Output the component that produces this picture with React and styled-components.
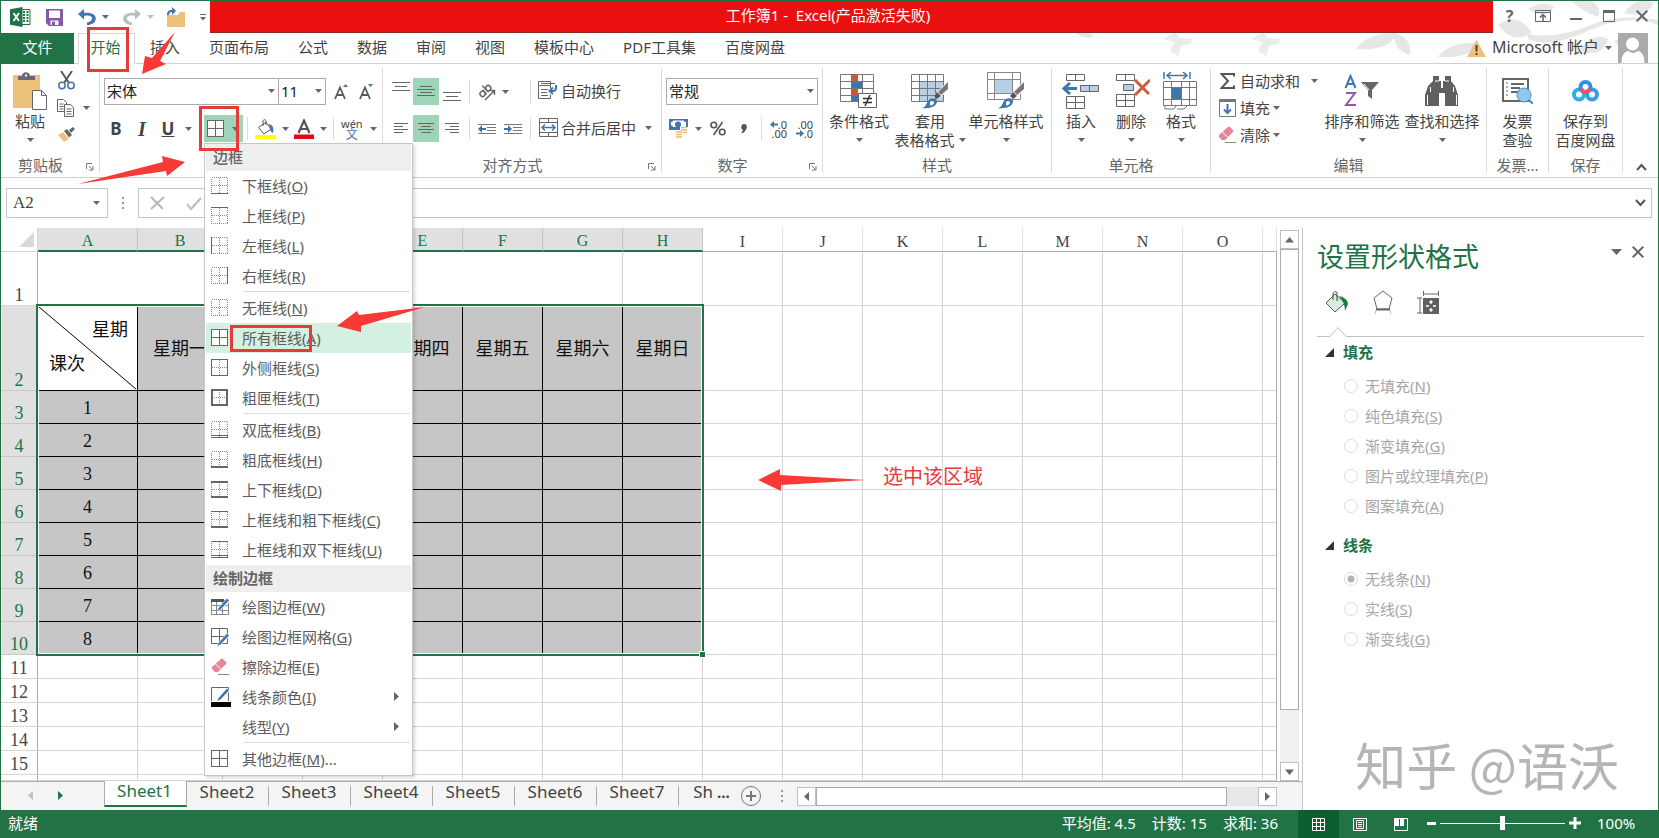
import React from "react";
import styled, { createGlobalStyle, css } from "styled-components";

const GREEN = "#217346";
const RED = "#e53b3b";

const Global = createGlobalStyle`
  *, *::before, *::after { box-sizing: border-box; }
  body { margin: 0; background: #fff; color: #444; font: 15px/20px "Noto Sans", "Noto Sans CJK SC", sans-serif; }
  button, input, select { font: inherit; color: inherit; margin: 0; }
  svg { display: block; flex: none; }
`;

const Window = styled.div`
  position: relative;
  display: flex;
  flex-direction: column;
  min-height: 100vh;
  border: 1px solid ${GREEN};
  border-bottom: 0;
  overflow: hidden;
`;

const Plain = styled.button`
  display: flex;
  align-items: center;
  justify-content: center;
  border: 0;
  padding: 0;
  background: none;
  white-space: nowrap;
`;

/* ---------- title bar and tabs ---------- */

const Foliage = styled.svg`
  position: absolute;
  top: 0;
  right: 0;
`;
const TitleBar = styled.header`
  position: relative;
  display: flex;
  height: 32px;
`;
const QuickAccess = styled.div`
  display: flex;
  align-items: center;
  width: 209px;
  padding-left: 9px;
`;
const QuickButton = styled(Plain)`
  width: ${(p) => p.$w}px;
  height: 30px;
  justify-content: flex-start;
  gap: 6px;
`;
const DocTitle = styled.h1`
  flex: 1;
  margin: 0;
  padding-right: 47px;
  background: #ea1010;
  border-bottom: 1px solid #8e2a1c;
  color: #fff;
  font-size: 15px;
  font-weight: 400;
  line-height: 29px;
  text-align: center;
  white-space: pre;
`;
const WindowControls = styled.div`
  display: flex;
  width: 165px;
  color: #666;
  font-weight: 700;
  font-size: 16px;
`;
const ControlButton = styled(Plain)`
  width: 33px;
  height: 30px;
`;
const TabRow = styled.nav`
  position: relative;
  display: flex;
  height: 31px;
  border-bottom: 1px solid #d0d0d0;
`;
const FileTab = styled(Plain)`
  width: 73px;
  height: 31px;
  padding-bottom: 3px;
  background: ${GREEN};
  color: #fff;
`;
const ActiveTab = styled(Plain)`
  width: 57px;
  height: 31px;
  margin: 0 15px 0 4px;
  padding: 0 2px 3px 0;
  border: 1px solid #d4d4d4;
  border-bottom-color: #fff;
  background: #fff;
  color: ${GREEN};
`;
const TabList = styled.div`
  display: flex;
  gap: 29px;
  flex: 1;
  height: 28px;
`;
const Account = styled(Plain)`
  gap: 6px;
  padding-right: 10px;
  height: 30px;
  font-size: 16px;
`;
const AccountName = styled.span`
  padding-bottom: 2px;
`;

/* ---------- ribbon ---------- */

const Ribbon = styled.section`
  display: flex;
  height: 114px;
  padding: 4px 0;
  border-bottom: 1px solid #d0d0d0;
`;
const GroupBox = styled.div`
  display: flex;
  flex-direction: column;
  flex: none;
  width: ${(p) => p.$w}px;
  border-right: 1px solid #dcdcdc;
`;
const GroupBody = styled.div`
  display: flex;
  height: 84px;
  padding-left: ${(p) => p.$pad || 0}px;
`;
const GroupFooter = styled.div`
  display: flex;
  align-items: center;
  height: 21px;
  padding-top: 4px;
  color: #666;
`;
const GroupLabel = styled.span`
  flex: 1;
  text-align: center;
  white-space: nowrap;
`;
const Launcher = styled(Plain)`
  width: 19px;
  height: 12px;
  padding-top: 4px;
`;
const Rows = styled.div`
  display: flex;
  flex-direction: column;
  gap: 10px;
  padding: 10px 0 0 ${(p) => p.$pad || 0}px;
`;
const Row = styled.div`
  display: flex;
  align-items: center;
  height: 27px;
`;
const StackedCommands = styled.div`
  display: flex;
  flex-direction: column;
  width: ${(p) => p.$w}px;
  padding-left: ${(p) => p.$pad || 0}px;
`;
const Tool = styled(Plain)`
  width: ${(p) => p.$w}px;
  height: 27px;
  ${(p) => p.$active && css`background: #9fd5b7;`}
  ${(p) => p.$start && css`justify-content: flex-start; padding-left: 3px; gap: ${p.$gap || 7}px;`}
`;
const LetterTool = styled(Tool)`
  font: ${(p) => (p.$italic ? "italic" : "normal")} 700 ${(p) => p.$size || 17}px/20px ${(p) => (p.$italic ? '"Liberation Serif", serif' : '"Noto Sans", sans-serif')};
  text-decoration: ${(p) => (p.$underline ? "underline" : "none")};
`;
const Command = styled(Plain)`
  height: 27px;
  gap: 3px;
  padding-bottom: 2px;
  justify-content: flex-start;
`;
const CommandIcon = styled.span`
  display: flex;
  justify-content: center;
  width: 20px;
`;
const CommandArrow = styled.span`
  padding-left: ${(p) => p.$gap || 0}px;
`;
const Big = styled(Plain)`
  flex-direction: column;
  justify-content: flex-start;
  width: ${(p) => p.$w}px;
  padding-top: 2px;
`;
const BigIcon = styled.span`
  display: flex;
  align-items: center;
  justify-content: center;
  height: 41px;
`;
const BigLine = styled.span`
  display: flex;
  align-items: center;
  justify-content: center;
  gap: 4px;
  height: 19px;
`;
const Divider = styled.i`
  flex: none;
  width: 1px;
  height: 23px;
  margin: 0 4px;
  background: #dcdcdc;
`;
const Combo = styled.label`
  display: flex;
  position: relative;
  width: ${(p) => p.$w}px;
  height: 27px;
  & + & { margin-left: -1px; }
`;
const ComboSelect = styled.select`
  appearance: none;
  width: 100%;
  border: 1px solid #ababab;
  border-radius: 0;
  padding: 0 3px 2px 2px;
  background: #fff;
  color: #222;
`;
const ComboArrow = styled.span`
  position: absolute;
  right: 4px;
  top: 11px;
  pointer-events: none;
`;
const MenuAnchor = styled.div`
  position: relative;
  margin-left: 8px;
`;
const Phonetic = styled.span`
  display: flex;
  flex-direction: column;
  align-items: center;
  font-size: 11px;
  line-height: 11px;
`;
const PhoneticGlyph = styled.span`
  color: #3f76ae;
  font-size: 12px;
`;
const Decimals = styled.span`
  display: flex;
  flex-direction: column;
  align-items: flex-end;
  width: 16px;
  font-size: 11px;
  line-height: 9px;
`;
const DecimalLine = styled.span`
  display: flex;
  align-items: center;
`;
const RibbonEnd = styled.div`
  display: flex;
  flex: 1;
  align-items: flex-end;
  justify-content: flex-end;
  padding: 0 11px 2px 0;
`;

/* ---------- border menu ---------- */

const Menu = styled.div`
  position: absolute;
  z-index: 5;
  top: 28px;
  left: 0;
  width: 209px;
  padding: 0 1px 1px;
  border: 1px solid #c6c6c6;
  background: #fff;
  box-shadow: 2px 2px 3px rgba(0, 0, 0, 0.15);
`;
const MenuHeading = styled.div`
  height: 27px;
  padding: 0 7px;
  background: #eee;
  color: #666;
  font-weight: ${(p) => (p.$bold ? 600 : 500)};
  line-height: 26px;
`;
const MenuItem = styled(Plain)`
  width: 100%;
  height: 30px;
  padding: 0 9px 1px 5px;
  justify-content: flex-start;
  color: #5c5c5c;
  ${(p) => p.$active && css`background: #d3f0e0;`}
`;
const MenuIcon = styled.span`
  width: 31px;
`;
const MenuLabel = styled.span`
  flex: 1;
  text-align: left;
`;
const MenuRule = styled.hr`
  height: 1px;
  margin: 0 1px 1px 38px;
  border: 0;
  background: #dcdcdc;
`;

/* ---------- formula bar ---------- */

const FormulaBar = styled.section`
  display: flex;
  height: 50px;
  padding: 10px 6px 10px 5px;
`;
const NameBox = styled.label`
  display: flex;
  align-items: center;
  width: 102px;
  padding: 0 7px 0 6px;
  border: 1px solid #c6c6c6;
`;
const BareInput = styled.input`
  flex: 1;
  min-width: 0;
  border: 0;
  padding: 0;
  background: none;
  font: 17px/20px "Liberation Serif", serif;
`;
const Grip = styled.span`
  display: flex;
  align-items: center;
  justify-content: center;
  width: 30px;
`;
const FormulaBox = styled.label`
  display: flex;
  align-items: center;
  flex: 1;
  gap: 16px;
  padding: 0 5px 0 11px;
  border: 1px solid #c6c6c6;
`;

/* ---------- worksheet ---------- */

const Workspace = styled.div`
  display: flex;
  flex: 1;
`;
const SheetPane = styled.main`
  display: flex;
  flex-direction: column;
  flex: 1;
  min-width: 0;
`;
const GridArea = styled.div`
  display: flex;
  flex: 1;
`;
const TableFrame = styled.div`
  position: relative;
  flex: 1;
  min-width: 0;
`;
const Grid = styled.table`
  width: 100%;
  table-layout: fixed;
  border-collapse: separate;
  border-spacing: 0;
  font: 18px/20px "Liberation Serif", "Noto Sans CJK SC", serif;
`;
const Corner = styled.th`
  padding: 4px 3px 4px 18px;
  border-right: 1px solid #d4d4d4;
  border-bottom: 1px solid #d4d4d4;
`;
const ColHead = styled.th`
  height: 24px;
  padding: 3px 0 0;
  font-size: 16px;
  line-height: 19px;
  font-weight: 400;
  border-right: 1px solid #e0e0e0;
  border-bottom: 1px solid #ababab;
  ${(p) => p.$sel && css`
    background: #e0e0e0;
    color: ${GREEN};
    border-right-color: #c4c4c4;
    border-bottom: 2px solid ${GREEN};
  `}
`;
const RowHead = styled.th`
  height: ${(p) => p.$h}px;
  padding: 0;
  font-weight: 400;
  vertical-align: bottom;
  border-right: 1px solid #ababab;
  border-bottom: 1px solid #d8d8d8;
  ${(p) => p.$sel && css`background: #e0e0e0; color: ${GREEN}; border-bottom-color: #c8c8c8;`}
`;
const Cell = styled.td`
  padding: 2px 0 0;
  border-right: 1px solid #d4d4d4;
  border-bottom: 1px solid #d4d4d4;
  text-align: center;
  color: #111;
  white-space: nowrap;
  ${(p) => p.$sel && css`background: #c6c6c6; border-color: #000;`}
  ${(p) => p.$edge && css`border-right-color: #ababab;`}
`;
const SplitCell = styled.td`
  position: relative;
  padding: 0 9px 2px 11px;
  border-right: 1px solid #000;
  border-bottom: 1px solid #000;
  color: #111;
`;
const SplitTop = styled.div`
  padding-bottom: 14px;
  text-align: right;
`;
const Diagonal = styled.svg`
  position: absolute;
  inset: 0;
  width: 100%;
  height: 100%;
`;
const Selection = styled.div`
  position: absolute;
  left: 35px;
  top: 76px;
  width: 668px;
  height: 352px;
  border: 2px solid ${GREEN};
  box-shadow: inset 0 0 0 1px #fff;
  pointer-events: none;
  &::after {
    content: "";
    position: absolute;
    right: -4px;
    bottom: -4px;
    width: 7px;
    height: 7px;
    border: 1px solid #fff;
    background: ${GREEN};
  }
`;
const VScroll = styled.div`
  display: flex;
  flex-direction: column;
  width: 19px;
  margin: 2px 3px 0 3px;
  background: #f0f0f0;
`;
const HScroll = styled.div`
  display: flex;
  flex: none;
  width: 480px;
  height: 19px;
  margin: 5px 25px 0 0;
  background: #e8e8e8;
`;
const ScrollButton = styled(Plain)`
  flex: none;
  width: 19px;
  height: 19px;
  border: 1px solid #c0c0c0;
  background: #fff;
`;
const ScrollThumb = styled.div`
  flex: none;
  ${(p) => (p.$vertical ? css`height: 461px;` : css`width: 411px;`)}
  border: 1px solid #ababab;
  background: #fff;
`;
const Spacer = styled.div`
  flex: 1;
`;
const SheetBar = styled.footer`
  display: flex;
  height: 29px;
  border-top: 1px solid #ababab;
  background: #f4f4f4;
`;
const SheetNav = styled.div`
  display: flex;
  align-items: center;
  flex: none;
  gap: 20px;
  width: 103px;
  padding-left: 25px;
`;
const SheetTab = styled(Plain)`
  position: relative;
  flex: none;
  width: 82px;
  height: 22px;
  padding: 0 2px 3px 0;
  font-size: 17px;
  ${(p) => p.$active && css`
    width: 83px;
    height: 26px;
    margin-top: -1px;
    padding-bottom: 4px;
    background: #fff;
    color: ${GREEN};
    border: solid #ababab;
    border-width: 0 1px;
    border-bottom: 2px solid ${GREEN};
  `}
  ${(p) => p.$rule && css`
    &::after {
      content: "";
      position: absolute;
      right: 0;
      top: 4px;
      height: 20px;
      border-right: 1px solid #ababab;
    }
  `}
  ${(p) => p.$short && css`
    width: 36px;
    justify-content: flex-end;
  `}
`;
const More = styled.span`
  padding: 0 10px 0 2px;
  font-weight: 700;
`;

/* ---------- format pane ---------- */

const Pane = styled.aside`
  width: 356px;
  border-left: 1px solid #c6c6c6;
  padding: 13px 14px 0;
`;
const PaneHead = styled.div`
  display: flex;
  align-items: center;
  height: 32px;
`;
const PaneTitle = styled.h2`
  flex: 1;
  margin: 0;
  color: ${GREEN};
  font-size: 27px;
  line-height: 32px;
  font-weight: 400;
`;
const PaneTools = styled.div`
  display: flex;
  align-items: center;
  gap: 10px;
  padding-bottom: 10px;
`;
const PaneTabs = styled.div`
  display: flex;
  align-items: center;
  gap: 23px;
  height: 36px;
  margin-top: 11px;
  padding-left: 8px;
`;
const NotchRule = styled.svg`
  width: 100%;
  height: 11px;
  margin: 6px 0 5px;
`;
const Section = styled.fieldset`
  margin: 0;
  padding: 0 0 0 27px;
  border: 0;
  & + & { margin-top: 14px; }
`;
const SectionTitle = styled.legend`
  display: flex;
  align-items: center;
  gap: 9px;
  margin: 6px 0 9px -19px;
  padding: 0;
  color: ${GREEN};
  font-weight: 700;
  line-height: 20px;
`;
const Option = styled.label`
  display: flex;
  align-items: center;
  gap: 7px;
  height: 30px;
  color: #a6a6a6;
`;
const Radio = styled.input`
  appearance: none;
  width: 14px;
  height: 14px;
  border: 1px solid #dcdcdc;
  border-radius: 50%;
  background: #fff;
  &:checked {
    background: radial-gradient(circle, #b4b4b4 0 3px, #fff 4px);
  }
`;
const Watermark = styled.div`
  position: absolute;
  right: 39px;
  bottom: 42px;
  color: #b5b5b5;
  font: 400 51px/64px "Noto Sans CJK SC", sans-serif;
  white-space: nowrap;
`;

/* ---------- status bar ---------- */

const StatusBar = styled.footer`
  display: flex;
  align-items: center;
  height: 28px;
  padding-left: 7px;
  background: ${GREEN};
  color: #fff;
  white-space: nowrap;
`;
const StatusText = styled.span`
  padding-bottom: 3px;
`;
const Stats = styled.div`
  display: flex;
  gap: 16px;
  margin-left: auto;
  padding: 0 20px 3px 0;
`;
const ViewButton = styled(Plain)`
  width: 41px;
  height: 28px;
  ${(p) => p.$active && css`background: #0a6030;`}
`;
const ZoomBox = styled.div`
  display: flex;
  align-items: center;
  width: 237px;
  gap: 4px;
  padding: 0 0 2px 6px;
`;
const ZoomSlider = styled.input`
  appearance: none;
  width: 125px;
  height: 14px;
  background: linear-gradient(#fff, #fff) center / 100% 1px no-repeat;
  &::-webkit-slider-thumb {
    appearance: none;
    width: 5px;
    height: 14px;
    background: #fff;
  }
`;
const ZoomValue = styled.output`
  margin-left: 12px;
`;

const Annotations = styled.svg`
  position: absolute;
  z-index: 10;
  top: -1px;
  left: -1px;
  overflow: visible;
  pointer-events: none;
`;
const Callout = styled.p`
  position: absolute;
  left: 882px;
  top: 463px;
  margin: 0;
  color: ${RED};
  font-size: 20px;
  line-height: 26px;
`;

/* ---------- icons ---------- */

const Down = ({ color = "#666" }) => (
  <svg width="7" height="4"><path d="M0 0h7L3.5 4z" fill={color} /></svg>
);
const Tri = ({ dir, color = "#666" }) => (
  <svg width="10" height="10">
    <path fill={color} d={{ up: "M0 7.500h9L4.500 2z", down: "M0 2.500h9L4.500 8z", left: "M7 0v9L2 4.500z", right: "M2 0v9l5-4.500z" }[dir]} />
  </svg>
);
const Cross = ({ size = 11, color = "#666", w = 2 }) => (
  <svg width={size} height={size} stroke={color} strokeWidth={w}><path d={`M.7 .7L${size - 0.7} ${size - 0.7}M${size - 0.7} .7L.7 ${size - 0.7}`} /></svg>
);
const LauncherIcon = () => (
  <svg width="8" height="8" fill="none" stroke="#777"><path d="M.5 6V.5H6M3 3l3.500 3.500M7 3v4H3" /></svg>
);
const ExcelIcon = () => (
  <svg width="21" height="20">
    <path d="M12 2.500h8v15h-8" fill="#fff" stroke={GREEN} />
    <path d="M13 5h2M16.500 5h2M13 8h2M16.500 8h2M13 11h2M16.500 11h2M13 14h2M16.500 14h2" stroke={GREEN} strokeWidth="2" />
    <path d="M0 2.200L12.500 0v20L0 17.800z" fill={GREEN} />
    <path d="M3.500 6l5.500 8M9 6l-5.500 8" stroke="#fff" strokeWidth="1.800" />
  </svg>
);
const SaveIcon = () => (
  <svg width="17" height="17">
    <path d="M0 0h17v17H3l-3-3z" fill="#8458a5" />
    <path d="M3 1.500h11V9H3z" fill="#fff" /><path d="M4.500 11.500h8V16h-8z" fill="#fff" /><path d="M6 12.500h3V16H6z" fill="#8458a5" />
  </svg>
);
const UndoIcon = ({ color, flip }) => (
  <svg width="18" height="16" viewBox="0 0 18 16"><g transform={flip ? "translate(18 0) scale(-1 1)" : undefined}>
    <path d="M6 0L0 5l6 5.500V7c5-1.200 8.500 0 8 3-.4 2-2.500 3-5 3.500V16c5 0 8.500-2.500 8.800-6C18 5 13 3 6 3.800z" fill={color} />
  </g></svg>
);
const OpenIcon = () => (
  <svg width="20" height="20">
    <path d="M1 8h11l2-3h5v15H1z" fill="#ecc27a" />
    <path d="M1 8C1 4 3 3 6 3V0l4 4-4 4V5C4 5 3 6 3 8z" fill="#3f76ae" />
  </svg>
);
const RibbonOptionsIcon = () => (
  <svg width="16" height="12" fill="none" stroke="#666"><path d="M.5 .5h15v11H.5z" /><path d="M1 2.500h14" strokeWidth="1" /><path d="M8 11V5M5 7.500L8 4.500l3 3" strokeWidth="1.500" /></svg>
);
const WarningIcon = () => (
  <svg width="19" height="17"><path d="M9.500 0L19 17H0z" fill="#ecc27a" /><path d="M9.500 5v6.500M9.500 13v2" stroke="#444" strokeWidth="2" /></svg>
);
const AvatarIcon = () => (
  <svg width="30" height="30"><path d="M0 0h30v30H0z" fill="#ababab" /><circle cx="14.500" cy="11" r="6.500" fill="#fff" /><path d="M3.500 30c0-9 4-12 7-12 3 2.500 6 2.500 9 0 3 0 7 3 7 12z" fill="#fff" /></svg>
);
const PasteIcon = () => (
  <svg width="36" height="38">
    <path d="M1 3h27v33H1z" fill="#ecc27a" /><path d="M6 8V4h4c0-5 8-5 8 0h5v4z" fill="#6a6a6a" /><path d="M13 2.500h2v2h-2z" fill="#fff" />
    <path d="M20.500 18.500h9l5 5v14h-14z" fill="#fff" stroke="#666" /><path d="M29.500 18.500v5h5" fill="none" stroke="#666" />
  </svg>
);
const CutIcon = () => (
  <svg width="17" height="19" fill="none">
    <path d="M3 0l8 12M14 0L6 12" stroke="#5a5a5a" strokeWidth="2" /><circle cx="4" cy="14.500" r="3.200" stroke="#3f76ae" strokeWidth="1.500" /><circle cx="13" cy="14.500" r="3.200" stroke="#3f76ae" strokeWidth="1.500" />
  </svg>
);
const CopyIcon = () => (
  <svg width="18" height="18" fill="#fff" stroke="#666">
    <path d="M.5 .5h6l3 3v9h-9z" /><path d="M2.500 5h4M2.500 7.500h4M2.500 10h4" /><path d="M7.500 5.500h6l3 3v9h-9z" /><path d="M9.500 10h5M9.500 12.500h5M9.500 15h5" />
  </svg>
);
const PainterIcon = () => (
  <svg width="17" height="15"><path d="M0 8l5-3 6 7-5 3z" fill="#ecc27a" /><path d="M6 4l3-2 5 6-3 2.500z" fill="#666" /><path d="M11 3l4-3 2 2-4 4z" fill="#666" /></svg>
);
const SizeIcon = ({ up }) => (
  <svg width="15" height="17">
    <path d="M1 16L6 4.500 11 16M3 12h6" fill="none" stroke="#5a5a5a" strokeWidth="1.800" />
    <path d={up ? "M9 4h5l-2.500-3z" : "M9 1h5l-2.500 3z"} fill="#3f76ae" />
  </svg>
);
const FillIcon = () => (
  <svg width="21" height="20">
    <path d="M3.500 8.500L11 3l5 7-7 5z" fill="#fff" stroke="#555" /><path d="M8 7V2.500C8 0 11 0 11 2.500V6" fill="none" stroke="#555" />
    <path d="M14 5c4 1 5 4 4 9-3-1-3-5-4-9z" fill="#3f76ae" /><path d="M0 16h21v4H0z" fill="#ff0" />
  </svg>
);
const FontColorIcon = () => (
  <svg width="20" height="20"><path d="M4.500 14L10 1.500 15.500 14M6.500 10h7" fill="none" stroke="#555" strokeWidth="2.200" /><path d="M0 15.500h20V20H0z" fill="#e30613" /></svg>
);
const AlignIcon = ({ lines, h = 11 }) => (
  <svg width="18" height={h} stroke="#666" shapeRendering="crispEdges">{lines.map(([a, b], i) => <path key={i} d={`M${a} ${i * 3 + 0.5}H${b}`} />)}</svg>
);
const TopAlignIcon = () => (
  <svg width="18" height="19" stroke="#666" shapeRendering="crispEdges"><path d="M0 .5h18M3 4.500h12M0 8.500h18" /></svg>
);
const BottomAlignIcon = () => (
  <svg width="18" height="19" stroke="#666" shapeRendering="crispEdges"><path d="M0 10.500h18M3 14.500h12M0 18.500h18" /></svg>
);
const OrientIcon = () => (
  <svg width="20" height="18" fill="none" stroke="#666" strokeWidth="1.500">
    <g transform="rotate(-45 7 8)"><circle cx="4" cy="9" r="2.600" /><path d="M6.800 6v6M9.500 3v9" /><circle cx="12" cy="9" r="2.600" /></g>
    <path d="M8 17L17 8M13 7.500h4.500V12" />
  </svg>
);
const IndentIcon = ({ right }) => (
  <svg width="18" height="12">
    <path d="M0 1.500h18M9 4.500h9M9 7.500h9M0 10.500h18" stroke="#777" />
    <path d="M0 3h8v6H0z" fill="#fff" /><path d={right ? "M0 5h4V2l4 4-4 4V7H0z" : "M8 5H4V2L0 6l4 4V7h4z"} fill="#3f76ae" />
  </svg>
);
const WrapIcon = () => (
  <svg width="20" height="19" fill="none" stroke="#666">
    <path d="M.5 .5h12v4H.5zM.5 4.500v13h12v-4M12.500 4.500v3" /><path d="M3 2.500h14M3 8.500h7M3 11.500h6M3 14.500h7" />
    <path d="M18 4v3c0 2-1 3-3 3h-3M15 6.500L11.500 10l3.500 3" stroke="#3f76ae" strokeWidth="2" />
  </svg>
);
const MergeIcon = () => (
  <svg width="19" height="19" fill="none" stroke="#666"><path d="M.5 .5h18v18H.5zM.5 4.500h18M.5 14.500h18M9.500 .5v4M9.500 14.500v4" /><path d="M3 9.500h13M6 6.500l-3 3 3 3M13 6.500l3 3-3 3" stroke="#3f76ae" strokeWidth="1.500" /></svg>
);
const CurrencyIcon = () => (
  <svg width="20" height="19">
    <path d="M0 0h19v11H0z" fill="#3f76ae" /><path d="M2 3c2 0 2-1 2-1.500h11c0 1 1 1.500 2 1.500v5h-3H4c0-1-1-1.500-2-1.500z" fill="#fff" /><circle cx="9" cy="5.500" r="3" fill="#3f76ae" />
    <path d="M11 8h8v4h-8zM6 12h8v6H6zM14 12h5v4h-5z" fill="#fff" /><path d="M12 8.500h6M12 11h6M7 13h6M7 15.500h6M7 18h6M14 13.500h4" stroke="#e8bc72" strokeWidth="1.600" />
  </svg>
);
const TinyArrow = ({ right }) => (
  <svg width="8" height="7"><path d={right ? "M0 2.500h4V0l4 3.500L4 7V4.500H0z" : "M8 2.500H4V0L0 3.500 4 7V4.500h4z"} fill="#3f76ae" /></svg>
);
const Brush = () => (
  <g>
    <path d="M37 9v9L28 27l-5-4z" fill="#fff" /><path d="M37 10v7l-7 6-3-3z" fill="#777" /><path d="M26 20l4 4-4 3-3-3z" fill="#555" />
    <path d="M11 36c4-1 4-4 6-7 3-4 8-3 9 0 0 5-6 8-15 7z" fill="#3f76ae" /><path d="M19 30c2-2 4-1 4 1-1 2-3 3-4 2z" fill="#fff" />
  </g>
);
const CondIcon = () => (
  <svg width="38" height="36">
    <path d="M.5 1.500h33v27H.5z" fill="#fff" /><path d="M11 1h7v7h-7zM11 15h7v7h-7z" fill="#c9573c" /><path d="M11 8h11v7H11zM11 22h7v7h-7z" fill="#3f76ae" />
    <path d="M.5 1.500h33v27H.5zM.5 8.500h33M.5 15.500h33M.5 22.500h33M11.500 1v28M22.500 1v28" fill="none" stroke="#777" />
    <path d="M18.500 20.500h18v14h-18z" fill="#fff" stroke="#666" /><path d="M23 25.500h9M23 29.500h9M30 22l-5 11" stroke="#333" strokeWidth="1.500" />
  </svg>
);
const TableStyleIcon = () => (
  <svg width="38" height="38"><path d="M.5 2.500h32v27H.5z" fill="#fff" /><path d="M9 9h23v21H9z" fill="#b9cfe6" /><path d="M.5 2.500h32v27H.5zM.5 9.500h32M.5 16.500h32M.5 23.500h32M8.500 2v28M16.500 2v28M24.500 2v28" fill="none" stroke="#777" /><Brush /></svg>
);
const CellStyleIcon = () => (
  <svg width="38" height="38"><path d="M.5 .5h33v27H.5z" fill="#fff" /><path d="M8 8h17v13H8z" fill="#b9cfe6" /><path d="M.5 .5h33v27H.5zM.5 7.500h33M.5 21.500h33M7.500 0v28M25.500 0v28" fill="none" stroke="#888" /><Brush /></svg>
);
const InsertIcon = () => (
  <svg width="38" height="36" fill="#fff" stroke="#666">
    <path d="M4.500 1.500h18v6h-18zM13.500 1.500v6M4.500 23.500h18v12h-18zM13.500 23.500v12M4.500 29.500h18" /><path d="M18.500 12.500h18v6h-18z" fill="#b9cfe6" /><path d="M27.500 12.500v6" /><path d="M15 15.500H3M8 10l-6 5.500L8 21" fill="none" stroke="#3f76ae" strokeWidth="3" />
  </svg>
);
const DeleteIcon = () => (
  <svg width="38" height="36" fill="#fff" stroke="#666">
    <path d="M4.500 1.500h18v6h-18zM13.500 1.500v6M4.500 21.500h18v12h-18zM13.500 21.500v12M4.500 27.500h18" /><path d="M11.500 11.500h10v6h-10z" fill="#b9cfe6" /><path d="M23 7l14 14M38 7L23 22" fill="none" stroke="#d05a3c" strokeWidth="3" />
  </svg>
);
const FormatIcon = () => (
  <svg width="36" height="38" fill="none" stroke="#777">
    <path d="M1 0v7M27 0v7M4 3.500h20M8 0L4 3.500 8 7M20 0l4 3.500L20 7" stroke="#3f76ae" strokeWidth="1.500" />
    <path d="M.5 9.500h33v24H.5zM.5 15.500h33M.5 27.500h33M8.500 9v25M18.500 9v25M26.500 9v25" /><path d="M9 16h9v11H9z" fill="#3f76ae" stroke="none" /><path d="M2 34v3h9l2-3M14 37h7l3-3" />
  </svg>
);
const SumIcon = () => (
  <svg width="15" height="16"><path d="M14 3.500V1H1.500L8 8l-6.500 7H14v-2.500" fill="none" stroke="#555" strokeWidth="2" /></svg>
);
const FillDownIcon = () => (
  <svg width="17" height="18"><path d="M.5 .5h16v17H.5z" fill="#fff" stroke="#777" /><path d="M0 0h17v3H0z" fill="#777" /><path d="M8.500 5v9M5 10.500L8.500 14l3.500-3.500" fill="none" stroke="#3f76ae" strokeWidth="2" /></svg>
);
const EraserIcon = () => (
  <svg width="18" height="17"><path d="M1 9L10 1q1-1 2 0l3 3q1 1 0 2L7 14H4L1 11z" fill="#e78698" /><path d="M4.500 6l5.500 5.500" stroke="#fff" /><path d="M7 16.500h11" stroke="#888" /></svg>
);
const SortIcon = () => (
  <svg width="36" height="34" fill="none">
    <path d="M1.500 14L6.500 2l5 12M3 10h7" stroke="#3f76ae" strokeWidth="2" /><path d="M2 19h9L2 31h10" stroke="#8e5aa8" strokeWidth="2" />
    <path d="M17 8h18l-7 8v9l-4-3v-6z" fill="#666" /><path d="M20 10l5 6" stroke="#fff" />
  </svg>
);
const FindIcon = () => (
  <svg width="34" height="31"><path d="M8 1h6v5h2v7h2V6h2V1h6v5l4 5 3 9v11H20V18h-6v13H0V20l3-9 5-5z" fill="#606060" /><path d="M2.500 30V20M31.500 30V20M5.500 12v5M28.500 12v5M10 6h4M20 6h4" stroke="#fff" /></svg>
);
const InvoiceIcon = () => (
  <svg width="31" height="26"><path d="M1 1h25v22H1z" fill="#fff" stroke="#666" strokeWidth="2" /><path d="M5 4v16" stroke="#666" strokeDasharray="2 2" /><path d="M9 6h13M9 10h9M9 14h7" stroke="#666" strokeWidth="2" /><circle cx="22" cy="17" r="7" fill="#90c8f4" stroke="#4a8ac0" /><path d="M27 22l4 4" stroke="#4a8ac0" strokeWidth="2" /></svg>
);
const CloudIcon = () => (
  <svg width="27" height="22" fill="none" strokeWidth="4"><circle cx="7" cy="14.500" r="5" stroke="#2fb0e8" /><circle cx="20" cy="14.500" r="5" stroke="#3a9be6" /><circle cx="13.500" cy="7" r="5" stroke="#2f8fe0" /><path d="M9 9q4.500 6 9 0" stroke="#ea5070" strokeWidth="4" /></svg>
);
const Chevron = ({ up }) => (
  <svg width="11" height="8" fill="none" stroke="#555" strokeWidth="2"><path d={up ? "M1 7l4.500-5L10 7" : "M1 1l4.500 5L10 1"} /></svg>
);
const BorderIcon = ({ t, b, l, r, all, color = "#666" }) => {
  const box = "M.5 .5h16v16H.5zM8.500 .5v16M.5 8.500h16";
  const line = (kind, thin, thick) => kind && (kind === "thick"
    ? <path d={thick} fill={color} />
    : <path d={thin} stroke={color} />);
  return (
    <svg width="18" height="18" fill="none" shapeRendering="crispEdges">
      {all
        ? <path d={box} fill="#fff" stroke={color} />
        : <path d={box} stroke="#888" strokeDasharray="1 1" />}
      {line(t, "M0 .5h17", "M0 0h17v2H0z")}
      {line(l, "M.5 0v17", "M0 0h2v17H0z")}
      {line(r, "M16.500 0v17", "M15 0h2v17h-2z")}
      {line(b, "M0 16.500h17", "M0 15h17v2H0z")}
      {b === "double" && <path d="M0 14.500h17" stroke={color} />}
    </svg>
  );
};
const Pencil = () => (
  <g><path d="M6 15l1-4L16 1l3 3-9 9z" fill="#fff" /><path d="M6 14l2-3.500L16 1.500l2 2L9.500 12.500z" fill="#3f76ae" /></g>
);
const DrawIcon = ({ kind }) => (
  <svg width="20" height="20" fill="none" stroke="#666">
    {kind === "line" && <><path d="M.5 3.500h17v14H.5zM.5 8.500h17M.5 13.500h17M5.500 3v15M11.500 3v15" stroke="#888" /><path d="M0 2h13v3H0z" fill="#555" stroke="none" /></>}
    {kind === "grid" && <path d="M.5 1.500h16v15H.5zM8.500 1v16M0 9.500h17" />}
    {kind === "color" && <><path d="M.5 14V.5h17V14" /><path d="M0 15h20v5H0z" fill="#000" stroke="none" /></>}
    <g stroke="none" transform={kind === "grid" ? "translate(0 5)" : undefined}><Pencil /></g>
  </svg>
);
const BucketIcon = () => (
  <svg width="24" height="23"><path d="M1 12L10 3l10 9-10 9z" fill="#d9ecdf" stroke="#555" /><path d="M8 9V3c0-3 5-3 4 0v7" fill="none" stroke="#444" /><path d="M14 5c5 1 9 4 9 8l-3 7c0-6-2-11-6-15z" fill="#1f7a3d" /></svg>
);
const PentagonIcon = () => (
  <svg width="22" height="24" fill="none" stroke="#666"><path d="M11 1l9 7-3 11H5L2 8z" /><path d="M4 19.500h14" strokeWidth="2" /><path d="M4 20l-1 4M18 20l1 4" stroke="#bbb" /></svg>
);
const SizePropsIcon = () => (
  <svg width="22" height="23" fill="none" stroke="#666"><path d="M6.500 3h15M6.500 0v5M21.500 0v5M3 7v15M0 7h5M0 22h5" /><path d="M6 7h16v16H6z" fill="#606060" stroke="none" /><path d="M14 10v3M14 17v3M9 15h3M16 15h3M12.500 11.500L14 10l1.500 1.500M12.500 18.500L14 20l1.500-1.500" stroke="#fff" strokeWidth="1.300" /></svg>
);

/* ---------- data ---------- */

const TABS = ["插入", "页面布局", "公式", "数据", "审阅", "视图", "模板中心", "PDF工具集", "百度网盘"];
const COLS = "ABCDEFGHIJKLMNO".split("");
const COL_W = { A: 100, B: 85 };
const DAYS = ["星期一", "星期二", "星期三", "星期四", "星期五", "星期六", "星期日"];

const BORDER_MENU = [
  { label: "下框线", k: "O", icon: <BorderIcon b="solid" /> },
  { label: "上框线", k: "P", icon: <BorderIcon t="solid" /> },
  { label: "左框线", k: "L", icon: <BorderIcon l="solid" /> },
  { label: "右框线", k: "R", icon: <BorderIcon r="solid" /> },
  "rule",
  { label: "无框线", k: "N", icon: <BorderIcon /> },
  { label: "所有框线", k: "A", icon: <BorderIcon all />, active: true },
  { label: "外侧框线", k: "S", icon: <BorderIcon t="solid" b="solid" l="solid" r="solid" /> },
  { label: "粗匣框线", k: "T", icon: <BorderIcon t="thick" b="thick" l="thick" r="thick" /> },
  "rule",
  { label: "双底框线", k: "B", icon: <BorderIcon b="double" /> },
  { label: "粗底框线", k: "H", icon: <BorderIcon b="thick" /> },
  { label: "上下框线", k: "D", icon: <BorderIcon t="thick" b="thick" /> },
  { label: "上框线和粗下框线", k: "C", icon: <BorderIcon t="solid" b="thick" /> },
  { label: "上框线和双下框线", k: "U", icon: <BorderIcon t="solid" b="double" /> },
];
const DRAW_MENU = [
  { label: "绘图边框", k: "W", icon: <DrawIcon kind="line" /> },
  { label: "绘图边框网格", k: "G", icon: <DrawIcon kind="grid" /> },
  { label: "擦除边框", k: "E", icon: <EraserIcon /> },
  { label: "线条颜色", k: "I", icon: <DrawIcon kind="color" />, sub: true },
  { label: "线型", k: "Y", sub: true },
  "rule",
  { label: "其他边框", k: "M", icon: <BorderIcon all />, tail: "..." },
];
const FILLS = [["无填充", "N"], ["纯色填充", "S"], ["渐变填充", "G"], ["图片或纹理填充", "P"], ["图案填充", "A"]];
const LINES = [["无线条", "N"], ["实线", "S"], ["渐变线", "G"]];

/* ---------- pieces ---------- */

const Group = ({ label, w, pad, launcher, children }) => (
  <GroupBox $w={w}>
    <GroupBody $pad={pad}>{children}</GroupBody>
    <GroupFooter>
      <GroupLabel>{label}</GroupLabel>
      {launcher && <Launcher aria-label={label + "设置"}><LauncherIcon /></Launcher>}
    </GroupFooter>
  </GroupBox>
);
const BigButton = ({ w, icon, text, second, arrow }) => (
  <Big $w={w}>
    <BigIcon>{icon}</BigIcon>
    <BigLine>{text}</BigLine>
    <BigLine>{second}{arrow && <Down />}</BigLine>
  </Big>
);
const ComboBox = ({ w, label, value }) => (
  <Combo $w={w}>
    <ComboSelect aria-label={label} defaultValue={value}><option>{value}</option></ComboSelect>
    <ComboArrow><Down /></ComboArrow>
  </Combo>
);
const MenuItems = ({ items }) => items.map((it, i) => it === "rule" ? <MenuRule key={i} /> : (
  <MenuItem key={i} role="menuitem" $active={it.active}>
    <MenuIcon>{it.icon}</MenuIcon>
    <MenuLabel>{it.label}(<u>{it.k}</u>){it.tail}</MenuLabel>
    {it.sub && <Tri dir="right" />}
  </MenuItem>
));
const RadioSection = ({ title, name, options, checked }) => (
  <Section disabled>
    <SectionTitle><svg width="9" height="9"><path d="M9 0v9H0z" fill="#333" /></svg>{title}</SectionTitle>
    {options.map(([text, k], i) => (
      <Option key={text}><Radio type="radio" name={name} defaultChecked={i === checked} /><span>{text}(<u>{k}</u>)</span></Option>
    ))}
  </Section>
);

const RibbonBar = () => (
  <Ribbon>
    <Group label="剪贴板" w={99} pad={7} launcher>
      <BigButton w={44} icon={<PasteIcon />} text="粘贴" arrow />
      <StackedCommands $w={44} $pad={4}>
        <Command aria-label="剪切"><CommandIcon><CutIcon /></CommandIcon></Command>
        <Command aria-label="复制"><CommandIcon><CopyIcon /></CommandIcon><CommandArrow $gap={4}><Down /></CommandArrow></Command>
        <Command aria-label="格式刷"><CommandIcon><PainterIcon /></CommandIcon></Command>
      </StackedCommands>
    </Group>
    <Group label="字体" w={283} pad={4} launcher>
      <Rows>
        <Row>
          <ComboBox w={175} label="字体" value="宋体" />
          <ComboBox w={48} label="字号" value="11" />
          <Tool $w={30} aria-label="增大字号"><SizeIcon up /></Tool>
          <Tool $w={20} aria-label="减小字号"><SizeIcon /></Tool>
        </Row>
        <Row>
          <LetterTool $w={24}>B</LetterTool>
          <LetterTool $w={28} $italic $size={20}>I</LetterTool>
          <LetterTool $w={24} $underline>U</LetterTool>
          <Tool $w={16} aria-label="下划线选项"><Down /></Tool>
          <MenuAnchor>
            <Tool $w={39} $active $start aria-label="边框"><BorderIcon all /><Down /></Tool>
            <Menu role="menu">
              <MenuHeading>边框</MenuHeading>
              <MenuItems items={BORDER_MENU} />
              <MenuHeading $bold>绘制边框</MenuHeading>
              <MenuItems items={DRAW_MENU} />
            </Menu>
          </MenuAnchor>
          <Divider />
          <Tool $w={39} $start $gap={6} aria-label="填充颜色"><FillIcon /><Down /></Tool>
          <Tool $w={38} $start $gap={6} aria-label="字体颜色"><FontColorIcon /><Down /></Tool>
          <Divider />
          <Tool $w={39} $start aria-label="拼音"><Phonetic>wén<PhoneticGlyph>文</PhoneticGlyph></Phonetic><Down /></Tool>
        </Row>
      </Rows>
    </Group>
    <Group label="对齐方式" w={279} pad={5} launcher>
      <Rows>
        <Row>
          <Tool $w={25} aria-label="顶端对齐"><TopAlignIcon /></Tool>
          <Tool $w={26} $active aria-label="垂直居中"><AlignIcon lines={[[3, 15], [0, 18], [3, 15], [0, 18]]} /></Tool>
          <Tool $w={26} aria-label="底端对齐"><BottomAlignIcon /></Tool>
          <Divider />
          <Tool $w={52} $start $gap={5} aria-label="方向"><OrientIcon /><Down /></Tool>
          <Divider />
        </Row>
        <Row>
          <Tool $w={25} aria-label="左对齐"><AlignIcon lines={[[2, 16], [2, 11], [2, 16], [2, 11]]} /></Tool>
          <Tool $w={26} $active aria-label="居中"><AlignIcon lines={[[1, 17], [4, 14], [1, 17], [4, 14]]} /></Tool>
          <Tool $w={26} aria-label="右对齐"><AlignIcon lines={[[2, 16], [7, 16], [2, 16], [7, 16]]} /></Tool>
          <Divider />
          <Tool $w={26} aria-label="减少缩进"><IndentIcon /></Tool>
          <Tool $w={26} aria-label="增加缩进"><IndentIcon right /></Tool>
          <Divider />
        </Row>
      </Rows>
      <Rows $pad={3}>
        <Command><CommandIcon><WrapIcon /></CommandIcon>自动换行</Command>
        <Command><CommandIcon><MergeIcon /></CommandIcon>合并后居中<CommandArrow $gap={6}><Down /></CommandArrow></Command>
      </Rows>
    </Group>
    <Group label="数字" w={161} pad={4} launcher>
      <Rows>
        <Row><ComboBox w={152} label="数字格式" value="常规" /></Row>
        <Row>
          <Tool $w={38} $start $gap={6} aria-label="会计数字格式"><CurrencyIcon /><Down /></Tool>
          <Tool $w={27} aria-label="百分比"><svg width="16" height="15" fill="none" stroke="#555" strokeWidth="1.600"><circle cx="3.800" cy="4" r="2.800" /><circle cx="12.200" cy="11" r="2.800" /><path d="M12.500 1L3.500 14" /></svg></Tool>
          <Tool $w={26} aria-label="千位分隔"><svg width="6" height="9"><path d="M3 0c4 0 4 5-1 9H0c2-2 2-3 2-3-3-1-2-6 1-6z" fill="#555" /></svg></Tool>
          <Divider />
          <Tool $w={26} aria-label="增加小数位数"><Decimals><DecimalLine><TinyArrow />.0</DecimalLine><DecimalLine>.00</DecimalLine></Decimals></Tool>
          <Tool $w={26} aria-label="减少小数位数"><Decimals><DecimalLine>.00</DecimalLine><DecimalLine><TinyArrow right />.0</DecimalLine></Decimals></Tool>
        </Row>
      </Rows>
    </Group>
    <Group label="样式" w={229}>
      <BigButton w={72} icon={<CondIcon />} text="条件格式" arrow />
      <BigButton w={70} icon={<TableStyleIcon />} text="套用" second="表格格式" arrow />
      <BigButton w={82} icon={<CellStyleIcon />} text="单元格样式" arrow />
    </Group>
    <Group label="单元格" w={159} pad={4}>
      <BigButton w={50} icon={<InsertIcon />} text="插入" arrow />
      <BigButton w={50} icon={<DeleteIcon />} text="删除" arrow />
      <BigButton w={50} icon={<FormatIcon />} text="格式" arrow />
    </Group>
    <Group label="编辑" w={276}>
      <StackedCommands $w={111} $pad={6}>
        <Command><CommandIcon><SumIcon /></CommandIcon>自动求和<CommandArrow $gap={8}><Down /></CommandArrow></Command>
        <Command><CommandIcon><FillDownIcon /></CommandIcon>填充<CommandArrow><Down /></CommandArrow></Command>
        <Command><CommandIcon><EraserIcon /></CommandIcon>清除<CommandArrow><Down /></CommandArrow></Command>
      </StackedCommands>
      <BigButton w={80} icon={<SortIcon />} text="排序和筛选" arrow />
      <BigButton w={80} icon={<FindIcon />} text="查找和选择" arrow />
    </Group>
    <Group label="发票..." w={62}><BigButton w={62} icon={<InvoiceIcon />} text="发票" second="查验" /></Group>
    <Group label="保存" w={74}><BigButton w={74} icon={<CloudIcon />} text="保存到" second="百度网盘" /></Group>
    <RibbonEnd><Plain aria-label="折叠功能区"><Chevron up /></Plain></RibbonEnd>
  </Ribbon>
);

const GridRow = ({ n, h, label = n }) => {
  const inSel = n >= 2 && n <= 10;
  return (
    <tr>
      <RowHead $h={h} $sel={inSel}>{label}</RowHead>
      {n === 1 && <Cell colSpan={7} />}
      {COLS.map((c, i) => {
        if (n === 1 && i < 7) return null;
        if (n === 2 && i === 0) return (
          <SplitCell key={c}>
            <Diagonal viewBox="0 0 100 85" preserveAspectRatio="none"><path d="M1 1L99 84" stroke="#000" /></Diagonal>
            <SplitTop>星期</SplitTop>
            <div>课次</div>
          </SplitCell>
        );
        const text = n === 2 && i < 8 ? DAYS[i - 1] : inSel && i === 0 ? n - 2 : null;
        return <Cell key={c} $sel={inSel && i < 8}>{text}</Cell>;
      })}
      <Cell $edge />
    </tr>
  );
};

const Worksheet = () => (
  <Grid>
    <colgroup>
      <col width="37" />
      {COLS.map((c) => <col key={c} width={COL_W[c] || 80} />)}
      <col />
    </colgroup>
    <thead>
      <tr>
        <Corner><svg width="15" height="15"><path d="M15 0v15H0z" fill="#d8d8d8" /></svg></Corner>
        {COLS.map((c, i) => <ColHead key={c} $sel={i < 8}>{c}</ColHead>)}
        <ColHead />
      </tr>
    </thead>
    <tbody>
      <GridRow n={1} h={54} />
      <GridRow n={2} h={85} />
      {[3, 4, 5, 6, 7, 8, 9, 10].map((n) => <GridRow key={n} n={n} h={33} />)}
      {[11, 12, 13, 14, 15].map((n) => <GridRow key={n} n={n} h={24} />)}
      <GridRow n={16} h={6} label="" />
    </tbody>
  </Grid>
);

export default function App() {
  return (
    <Window>
      <Global />
      <Foliage width="600" height="62" fill="#e6e6e6" aria-hidden="true">
        <path d="M16 30q10 10 20 5l-8-5z" /><path d="M105 38l12-7 5 6 12 1-1 5-10 2-3 10-8-5 4-9z" opacity=".8" /><path d="M193 38l12-7 5 6 12 1-1 5-10 2-3 10-8-5 4-9z" opacity=".8" />
        <path d="M298 48q10-16 40-16-4 18-40 16zM336 32q18 4 16 22-16-4-16-22zM380 56q12-16 40-14-8 16-40 14zM470 38q20 10 60-8 30-14 60-10l10 4v-5q-30-6-60 2-40 18-70 12z" />
        <path d="M440 24q20-14 34 8-20 12-34-8zM520 50q16-20 30-12-6 20-30 12zM540 16q-20-8-26-16h20q10 6 6 16zM566 12q12-18 30-10-8 16-30 10zM470 8q16-10 26-2-8 14-26 2zM556 40q16-8 24 6-14 8-24-6z" />
      </Foliage>
      <TitleBar>
        <QuickAccess>
          <QuickButton $w={36} aria-label="Excel"><ExcelIcon /></QuickButton>
          <QuickButton $w={32} aria-label="保存"><SaveIcon /></QuickButton>
          <QuickButton $w={45} aria-label="撤销"><UndoIcon color="#3f76ae" /><Down /></QuickButton>
          <QuickButton $w={43} aria-label="重做"><UndoIcon color="#bdbdbd" flip /><Down color="#bdbdbd" /></QuickButton>
          <QuickButton $w={34} aria-label="打开"><OpenIcon /></QuickButton>
          <QuickButton $w={8} aria-label="自定义"><svg width="6" height="7"><path d="M0 .5h6" stroke="#666" /><path d="M0 3h6L3 6.500z" fill="#666" /></svg></QuickButton>
        </QuickAccess>
        <DocTitle>工作簿1 -  Excel(产品激活失败)</DocTitle>
        <WindowControls>
          <ControlButton>?</ControlButton>
          <ControlButton aria-label="功能区显示选项"><RibbonOptionsIcon /></ControlButton>
          <ControlButton aria-label="最小化"><svg width="12" height="10"><path d="M0 8h12" stroke="#666" strokeWidth="2" /></svg></ControlButton>
          <ControlButton aria-label="最大化"><svg width="12" height="12" fill="none" stroke="#666"><path d="M.5 .5h11v11H.5z" /><path d="M0 1.500h12" strokeWidth="3" /></svg></ControlButton>
          <ControlButton aria-label="关闭"><Cross size={12} /></ControlButton>
        </WindowControls>
      </TitleBar>
      <TabRow>
        <FileTab>文件</FileTab>
        <ActiveTab>开始</ActiveTab>
        <TabList>{TABS.map((t) => <Plain key={t}>{t}</Plain>)}</TabList>
        <Account><WarningIcon /><AccountName>Microsoft 帐户</AccountName><Down /><AvatarIcon /></Account>
      </TabRow>
      <RibbonBar />
      <FormulaBar>
        <NameBox><BareInput aria-label="名称框" defaultValue="A2" /><Down /></NameBox>
        <Grip><svg width="2" height="12"><path d="M1 0v2M1 5v2M1 10v2" stroke="#999" strokeWidth="2" /></svg></Grip>
        <FormulaBox>
          <svg width="52" height="14" fill="none" stroke="#b8b8b8" strokeWidth="2"><path d="M1 1l12 12M14 1L1 13M37 8l4 5L51 2" /></svg>
          <BareInput aria-label="编辑栏" />
          <Chevron />
        </FormulaBox>
      </FormulaBar>
      <Workspace>
        <SheetPane>
          <GridArea>
            <TableFrame><Worksheet /><Selection /></TableFrame>
            <VScroll>
              <ScrollButton aria-label="向上滚动"><Tri dir="up" /></ScrollButton>
              <ScrollThumb $vertical />
              <Spacer />
              <ScrollButton aria-label="向下滚动"><Tri dir="down" /></ScrollButton>
            </VScroll>
          </GridArea>
          <SheetBar>
            <SheetNav><Tri dir="left" color="#c0c0c0" /><Tri dir="right" color={GREEN} /></SheetNav>
            <SheetTab $active>Sheet1</SheetTab>
            {[2, 3, 4, 5, 6, 7].map((n) => <SheetTab key={n} $rule>Sheet{n}</SheetTab>)}
            <SheetTab $short>Sh</SheetTab>
            <More>...</More>
            <Plain aria-label="新工作表"><svg width="22" height="22" fill="none" stroke="#777"><circle cx="11" cy="11" r="9.500" /><path d="M11 6v10M6 11h10" strokeWidth="2" /></svg></Plain>
            <Spacer />
            <Grip><svg width="2" height="12"><path d="M1 0v2M1 5v2M1 10v2" stroke="#999" strokeWidth="2" /></svg></Grip>
            <HScroll>
              <ScrollButton aria-label="向左滚动"><Tri dir="left" /></ScrollButton>
              <ScrollThumb />
              <Spacer />
              <ScrollButton aria-label="向右滚动"><Tri dir="right" /></ScrollButton>
            </HScroll>
          </SheetBar>
        </SheetPane>
        <Pane>
          <PaneHead>
            <PaneTitle>设置形状格式</PaneTitle>
            <PaneTools>
              <svg width="11" height="6"><path d="M0 0h11L5.500 6z" fill="#666" /></svg>
              <Plain aria-label="关闭窗格"><Cross size={12} /></Plain>
            </PaneTools>
          </PaneHead>
          <PaneTabs>
            <Plain aria-label="填充与线条"><BucketIcon /></Plain>
            <Plain aria-label="效果"><PentagonIcon /></Plain>
            <Plain aria-label="大小与属性"><SizePropsIcon /></Plain>
          </PaneTabs>
          <NotchRule fill="none" stroke="#c0c0c0"><path d="M0 10.500h13l8-9 8 9h2000" /></NotchRule>
          <RadioSection title="填充" name="fill" options={FILLS} />
          <RadioSection title="线条" name="line" options={LINES} checked={0} />
        </Pane>
      </Workspace>
      <StatusBar>
        <StatusText>就绪</StatusText>
        <Stats><span>平均值: 4.5</span><span>计数: 15</span><span>求和: 36</span></Stats>
        <ViewButton $active aria-label="普通"><svg width="13" height="13" fill="none" stroke="#fff"><path d="M.5 .5h12v12H.5zM.5 4.500h12M.5 8.500h12M4.500 .5v12M8.500 .5v12" /></svg></ViewButton>
        <ViewButton aria-label="页面布局"><svg width="14" height="13" fill="none" stroke="#fff"><path d="M.5 .5h13v12H.5zM3.500 2.500h7v8h-7zM5 4.500h4M5 6.500h4M5 8.500h4" /></svg></ViewButton>
        <ViewButton aria-label="分页预览"><svg width="14" height="13"><path d="M.5 .5h13v12H.5z" fill="none" stroke="#fff" /><path d="M1 1h4v7H1zM6 1h4v7H6z" fill="#fff" /></svg></ViewButton>
        <ZoomBox>
          <svg width="9" height="3"><path d="M0 0h9v3H0z" fill="#fff" /></svg>
          <ZoomSlider type="range" aria-label="缩放" defaultValue="50" />
          <svg width="12" height="12"><path d="M6 0v12M0 6h12" stroke="#fff" strokeWidth="3" /></svg>
          <ZoomValue>100%</ZoomValue>
        </ZoomBox>
      </StatusBar>
      <Watermark>知乎 @语沃</Watermark>
      <Callout>选中该区域</Callout>
      <Annotations width="1" height="1" aria-hidden="true">
        <g fill="none" stroke={RED} strokeWidth="3"><path d="M88.500 28.500h39v42h-39zM200.500 107.500h37v42h-37zM231.500 326.500h79v24h-79z" /></g>
        <g fill="#f83a36">
          <path d="M175 32l-23 26-7-2-3 18 24-10-6-3z" /><path d="M78 184l85-22-1-6 23 6-18 14-1-5z" /><path d="M425 307l-66 8-2-4-20 15 24 6v-6z" /><path d="M758 480l22-11v6l86 5-85 5v6z" />
        </g>
      </Annotations>
    </Window>
  );
}
